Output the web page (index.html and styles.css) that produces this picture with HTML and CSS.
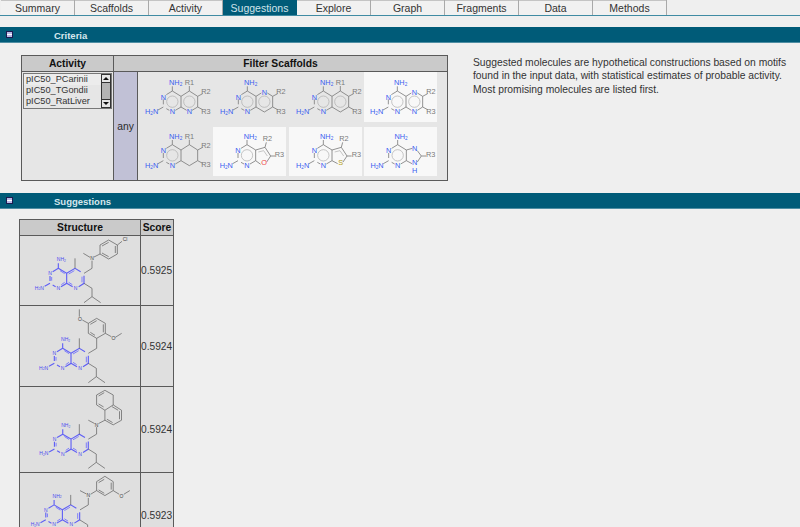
FILE: index.html
```html
<!DOCTYPE html>
<html lang="en">
<head>
<meta charset="utf-8">
<title>Suggestions</title>
<link rel="stylesheet" href="styles.css">
</head>
<body>
<nav class="tabs">
  <a class="tab">Summary</a><a class="tab">Scaffolds</a><a class="tab">Activity</a><a class="tab active">Suggestions</a><a class="tab">Explore</a><a class="tab">Graph</a><a class="tab">Fragments</a><a class="tab">Data</a><a class="tab">Methods</a>
</nav>

<svg class="defs" width="0" height="0" aria-hidden="true">
  <defs>
    <g id="pyr" class="bond">
      <path d="M127 78L153 94V126L136 136M118 136L109 131M100 118V103M109 89L127 78"/>
      <circle class="inner" cx="127" cy="110" r="17"/>
      <path d="M127 78V64M100 126L84 135"/>
    </g>
    <g id="pyrlabels">
      <text class="n" x="137" y="60" >NH<tspan class="sub" dy="3">2</tspan></text>
      <text class="n" x="100" y="104">N</text>
      <text class="n" x="127" y="148">N</text>
      <text class="n" x="65" y="148">H<tspan class="sub" dy="3">2</tspan><tspan dy="-3">N</tspan></text>
    </g>
    <g id="core" class="core">
      <path d="M175 265L200 280V310L183 320M167 320L158 315M150 303V288M158 275L175 265M200 280L225 265L242 275M252 287V310L236 320M218 320L200 310M175 265V250M150 310L134 319"/>
      <path class="thin" d="M180 272L194 281M194 307L184 314M155 291V302M206 282L223 272M246 290V307M206 307L217 314"/>
      <text class="cn" x="184" y="243">NH<tspan class="csub" dy="2">2</tspan></text>
      <text class="cn" x="150" y="285">N</text>
      <text class="cn" x="175" y="330">N</text>
      <text class="cn" x="227" y="330">N</text>
      <text class="cn" x="118" y="329">H<tspan class="csub" dy="2">2</tspan><tspan dy="-2">N</tspan></text>
    </g>
    <g id="tail" class="grey">
      <path d="M225 265V235M252 310L276 325V350L252 368M276 350L302 368"/>
    </g>
  </defs>
</svg>

<section>
  <header class="bar"><span class="toggle"></span><h2>Criteria</h2></header>
  <div class="criteria">
    <table class="filter">
      <colgroup><col class="col-activity"><col class="col-any"><col class="col-scaffolds"></colgroup>
      <thead><tr><th>Activity</th><th colspan="2">Filter Scaffolds</th></tr></thead>
      <tbody>
        <tr>
          <td>
            <div class="listbox">
              <ul class="options"><li class="first">pIC50_PCarinii</li><li>pIC50_TGondii</li><li>pIC50_RatLiver</li></ul>
              <div class="scroll"><span class="arrow up"></span><span class="thumb"></span><span class="arrow down"></span></div>
            </div>
          </td>
          <td class="any">any</td>
          <td class="scaffolds">
            <div class="grid">
              <div class="cell">
                <svg class="mol" viewBox="24 21 219 150">
                  <use href="#pyr"/>
                  <g class="bond"><path d="M153 94L178 78L203 94V126L186 136M170 136L153 126M178 78V63M203 94L218 86M203 126L218 134"/><circle class="inner" cx="178" cy="110" r="17"/></g>
                  <use href="#pyrlabels"/>
                  <text class="n" x="178" y="148">N</text>
                  <text class="r" x="178" y="60">R1</text><text class="r" x="228" y="88">R2</text><text class="r" x="228" y="146">R3</text>
                </svg>
              </div>
              <div class="cell">
                <svg class="mol" viewBox="24 21 219 150">
                  <use href="#pyr"/>
                  <g class="bond"><path d="M153 94L169 84M187 84L203 94V126L178 141L153 126M203 94L218 86M203 126L218 134"/><circle class="inner" cx="178" cy="110" r="17"/></g>
                  <use href="#pyrlabels"/>
                  <text class="n" x="178" y="91">N</text>
                  <text class="r" x="228" y="88">R2</text><text class="r" x="228" y="146">R3</text>
                </svg>
              </div>
              <div class="cell">
                <svg class="mol" viewBox="24 21 219 150">
                  <use href="#pyr"/>
                  <g class="bond"><path d="M153 94L178 78L203 94V126L178 141L153 126M178 78V63M203 94L218 86M203 126L218 134"/><circle class="inner" cx="178" cy="110" r="17"/></g>
                  <use href="#pyrlabels"/>
                  <text class="r" x="178" y="60">R1</text><text class="r" x="228" y="88">R2</text><text class="r" x="228" y="146">R3</text>
                </svg>
              </div>
              <div class="cell light">
                <svg class="mol" viewBox="24 21 219 150">
                  <g transform="translate(-3 0)">
                  <use href="#pyr"/>
                  <g class="bond"><path d="M153 94L169 84M187 84L203 94V126L187 136M169 136L153 126M203 94L218 86M203 126L218 134"/><circle class="inner" cx="178" cy="110" r="17"/></g>
                  <use href="#pyrlabels"/>
                  <text class="n" x="178" y="91">N</text><text class="n" x="178" y="148">N</text>
                  <text class="r" x="228" y="88">R2</text><text class="r" x="228" y="146">R3</text>
                  </g>
                </svg>
              </div>
              <div class="cell">
                <svg class="mol" viewBox="24 21 219 150">
                  <g transform="translate(0 -4)">
                  <use href="#pyr"/>
                  <g class="bond"><path d="M153 94L178 78L203 94V126L178 141L153 126M178 78V63M203 94L218 86M203 126L218 134"/></g>
                  <use href="#pyrlabels"/>
                  <text class="r" x="178" y="60">R1</text><text class="r" x="228" y="88">R2</text><text class="r" x="228" y="146">R3</text>
                  </g>
                </svg>
              </div>
              <div class="cell light">
                <svg class="mol" viewBox="24 21 219 150">
                  <g transform="translate(-1 -4)">
                  <use href="#pyr"/>
                  <g class="bond"><path d="M153 94L181 86L198 112L186 130M168 137L153 126M181 86L185 71M198 112H211"/><path class="inner" d="M161 100L177 96L188 112"/></g>
                  <use href="#pyrlabels"/>
                  <text class="o" x="178" y="140">O</text>
                  <text class="r" x="188" y="66">R2</text><text class="r" x="224" y="116">R3</text>
                  </g>
                </svg>
              </div>
              <div class="cell light">
                <svg class="mol" viewBox="24 21 219 150">
                  <g transform="translate(0 -4)">
                  <use href="#pyr"/>
                  <g class="bond"><path d="M153 94L181 86L198 112L186 130M170 135L153 126M181 86L185 71M198 112H212"/><path class="inner" d="M161 100L177 96L188 112"/></g>
                  <use href="#pyrlabels"/>
                  <text class="s" x="179" y="140">S</text>
                  <text class="r" x="189" y="66">R2</text><text class="r" x="226" y="116">R3</text>
                  </g>
                </svg>
              </div>
              <div class="cell light">
                <svg class="mol" viewBox="24 21 219 150">
                  <g transform="translate(-2 -4)">
                  <use href="#pyr"/>
                  <g class="bond"><path d="M153 94L171 89M186 96L198 112L186 130M170 135L153 126M198 112H212"/></g>
                  <use href="#pyrlabels"/>
                  <text class="n" x="178" y="96">N</text><text class="n" x="178" y="139">N</text><text class="n" x="178" y="162">H</text>
                  <text class="r" x="226" y="116">R3</text>
                  </g>
                </svg>
              </div>
            </div>
          </td>
        </tr>
      </tbody>
    </table>
    <p class="note">Suggested molecules are hypothetical constructions based on motifs found in the input data, with statistical estimates of probable activity. Most promising molecules are listed first.</p>
  </div>
</section>

<section>
  <header class="bar"><span class="toggle"></span><h2>Suggestions</h2></header>
  <table class="results">
    <colgroup><col class="c-structure"><col class="c-score"></colgroup>
    <thead><tr><th>Structure</th><th>Score</th></tr></thead>
    <tbody>
      <tr>
        <td class="structure">
          <svg class="big h1" viewBox="60 168 360 207">
            <use href="#core"/><use href="#tail"/>
            <g class="grey">
              <path d="M252 280L276 265V242M270 232L250 220M282 231L300 222V195L326 180L352 195V222L326 237L300 222M306 198L326 187M346 198V219M306 219L326 230M352 195L366 184"/>
            </g>
            <text class="atom" x="276" y="240">N</text><text class="atom" x="375" y="182">Cl</text>
          </svg>
        </td>
        <td class="score">0.5925</td>
      </tr>
      <tr>
        <td class="structure">
          <svg class="big h2" viewBox="60 318 360 240">
            <g transform="translate(13 180)"><use href="#core"/><use href="#tail"/></g>
            <g class="grey" transform="translate(0 300)">
              <path d="M265 160L290 145V115L316 100V70L290 55L265 70V100L290 115M271 73L290 62M310 73V97M271 97L285 106M316 100L334 110M346 112L365 100M265 70L247 60M238 50V28"/>
            </g>
            <text class="atom" x="340" y="420">O</text><text class="atom" x="240" y="362">O</text>
          </svg>
        </td>
        <td class="score">0.5924</td>
      </tr>
      <tr>
        <td class="structure">
          <svg class="big h3" viewBox="60 558 360 256">
            <g transform="translate(13 435)"><use href="#core"/><use href="#tail"/></g>
            <g class="grey" transform="translate(0 300)">
              <path d="M265 415L290 400V379M284 368L265 358M296 368L315 358L340 372L365 358V328L340 312L315 328L315 358M340 312V282L315 268L290 282V312L315 328M321 355L338 365M359 331V355M296 285L313 275M296 309L311 318M336 317L355 328"/>
            </g>
            <text class="atom" x="290" y="678">N</text>
          </svg>
        </td>
        <td class="score">0.5924</td>
      </tr>
      <tr>
        <td class="structure">
          <svg class="big h4" viewBox="60 814 360 256">
            <g transform="translate(-13 645)"><use href="#core"/><use href="#tail"/></g>
            <g class="grey" transform="translate(0 300)">
              <path d="M240 625L265 610V589M259 577L240 567M272 578L290 567L315 582L340 567V540L315 524L290 540V567M296 565L313 575M334 543V564M296 543L313 533M340 567L358 578M372 578L390 567"/>
            </g>
            <text class="atom" x="265" y="886">N</text><text class="atom" x="365" y="888">O</text>
          </svg>
        </td>
        <td class="score">0.5923</td>
      </tr>
    </tbody>
  </table>
</section>
</body>
</html>
```
FILE: styles.css
```css
html, body {
  margin: 0;
  height: 527px;
  overflow: hidden;
  background: #efefef;
  color: #2b2b2b;
  font-family: "Liberation Sans", Arial, sans-serif;
  font-size: 10.5px;
}

.defs { display: block; height: 0; }

.tabs {
  display: flex;
  height: 15px;
  padding-left: 1px;
  border-bottom: 1px solid #3f8ba3;
  margin-bottom: 11px;
}
.tab {
  width: 73px;
  height: 15px;
  line-height: 16px;
  text-align: center;
  border-right: 1px solid #a9a9a9;
  box-shadow: inset 0 1px #c4c4c4;
  color: #333;
  background: #f1f1f1;
}
.tab.active { background: #005b78; color: #cfe3ea; border-right-color: #005b78; box-shadow: none; }

.bar {
  display: flex;
  align-items: center;
  height: 15px;
  background: #005b78;
  border-bottom: 1px solid #4f8ea3;
}
.toggle {
  width: 5px;
  height: 5px;
  margin-left: 6px;
  border: 1px solid #1c1c50;
  background: linear-gradient(#b9b9e6 0 2px, #fff 2px 3px, #b9b9e6 3px);
}
.bar h2 {
  margin: 1px 0 0 41px;
  font-size: 9.5px;
  font-weight: bold;
  color: #d7e8ee;
}

.criteria {
  display: flex;
  align-items: flex-start;
  gap: 25px;
  padding: 12px 0 12px 21px;
}

table { border-collapse: collapse; }

.filter {
  width: 427px;
  table-layout: fixed;
  border: 1px solid #5a5a5a;
  height: 126px;
}
.col-activity { width: 92px; }
.col-any { width: 24px; }
.filter th {
  height: 15px;
  padding: 0;
  background: #cacaca;
  font-size: 10.3px;
  border: 1px solid #5a5a5a;
  color: #111;
}
.filter td { padding: 0; border: 1px solid #5a5a5a; background: #e6e6e6; vertical-align: top; }
.filter td.any {
  background: #c1c1d6;
  vertical-align: middle;
  text-align: center;
  font-size: 10.3px;
}

.listbox {
  display: flex;
  margin: 1px 0 0 1px;
  width: 89px;
  height: 36px;
  border: 1px solid #777;
  box-sizing: border-box;
  background: #dfe8ec;
}
.options { list-style: none; margin: 0; padding: 0 0 0 2px; flex: 1; background: #e6e6e6; }
.options li { height: 11px; line-height: 11px; font-size: 9.2px; color: #333; }
.options li.first { background: #ececec; margin-left: -2px; padding-left: 2px; }
.scroll {
  display: flex;
  flex-direction: column;
  width: 10px;
  background: #555;
  border: 1px solid #333;
  box-sizing: border-box;
}
.arrow { position: relative; height: 7px; background: #e6e6e6; }
.arrow::after {
  content: "";
  position: absolute;
  left: 1px;
  top: 2px;
  border-left: 3px solid transparent;
  border-right: 3px solid transparent;
}
.arrow.up::after { border-bottom: 3px solid #111; }
.arrow.down::after { border-top: 3px solid #111; }
.thumb { flex: 1; background: #b4b4b4; border-top: 1px solid #333; border-bottom: 1px solid #333; }

.grid {
  display: grid;
  grid-template-columns: repeat(4, 73px);
  grid-template-rows: 50px 49px;
  column-gap: 2.3px;
  row-gap: 5px;
  padding: 0;
}
.cell { height: 100%; }
.cell.light { background: #f8f8f8; }
.mol { display: block; width: 73px; height: 50px; }

.note {
  margin: 0;
  width: 316px;
  font-size: 10.3px;
  line-height: 13.4px;
  color: #333;
  position: relative;
  top: 1px;
}

.results {
  margin: 10px 0 0 19px;
  width: 155px;
  table-layout: fixed;
  border: 1px solid #5a5a5a;
}
.results th {
  height: 15px;
  padding: 0;
  background: #cacaca;
  border: 1px solid #5a5a5a;
  font-size: 10.3px;
  color: #111;
}
.c-structure { width: 121px; }
.results td { padding: 0; border: 1px solid #5a5a5a; background: #dfdfdf; }
.results td.score { font-size: 10.2px; color: #333; }
.big { display: block; width: 120px; }
.h1 { height: 69px; }
.h2 { height: 80px; }
.h3 { height: 85px; }
.h4 { height: 85px; }

.bond, .bond path, .bond circle { fill: none; stroke: #777; stroke-width: 2.4; }
.bond .inner { stroke: #aaa; stroke-width: 2; }
.grey, .grey path { fill: none; stroke: #555; stroke-width: 2; }
.core path { fill: none; stroke: #6060f5; stroke-width: 3.4; }
.core path.thin { stroke: #7070ff; stroke-width: 2.6; }

svg text { font-family: "Liberation Sans", Arial, sans-serif; text-anchor: middle; }
.n { fill: #3a5cf0; font-size: 22px; }
.r { fill: #7a7a7a; font-size: 22px; }
.o { fill: #ee4444; font-size: 22px; }
.s { fill: #b5a020; font-size: 22px; }
.sub { font-size: 14px; }
.cn { fill: #4a4af0; font-size: 15px; }
.csub { font-size: 10px; }
.atom { fill: #444; font-size: 15px; }
```
